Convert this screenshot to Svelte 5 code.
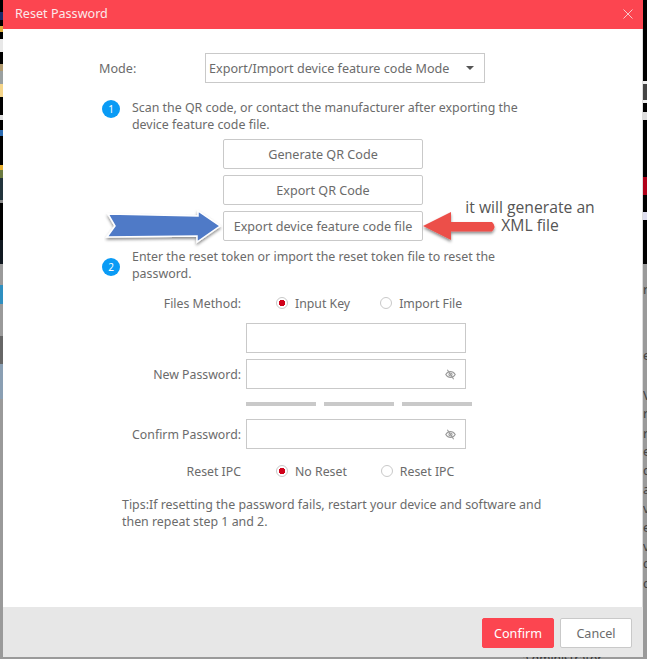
<script lang="ts">
  const stray = [
    { y: 281, t: "r" }, { y: 347, t: "e" }, { y: 387, t: "V" }, { y: 405, t: "r" },
    { y: 425, t: "r" }, { y: 443, t: "e" }, { y: 462, t: "c" }, { y: 481, t: "a" },
    { y: 500, t: "v" }, { y: 519, t: "e" }, { y: 538, t: "v" }, { y: 555, t: "c" },
    { y: 575, t: "c" }
  ];
</script>

{#snippet eye()}
  <svg class="eye" width="11" height="11" viewBox="0 0 14 14" aria-hidden="true">
    <path d="M1 7c1.600-2.600 3.600-3.900 6-3.900s4.400 1.300 6 3.900c-1.600 2.600-3.600 3.900-6 3.900S2.600 9.600 1 7z" fill="none" stroke="#999" stroke-width="1.400" />
    <circle cx="7" cy="7" r="2" fill="none" stroke="#999" stroke-width="1.400" />
    <path d="M3 1l8 12" stroke="#999" stroke-width="1.400" />
  </svg>
{/snippet}

<div class="screen">
  {#each stray as s}
    <span class="stray" style="top: {s.y}px">{s.t}</span>
  {/each}
  <span class="stray-bottom">a dministrator Recording</span>

  <div class="modal" role="dialog" aria-label="Reset Password">
    <div class="modal-head">
      <span class="title">Reset Password</span>
      <svg class="close" width="10" height="10" viewBox="0 0 10 10" aria-label="close">
        <path d="M.5.5l9 9M9.500.5l-9 9" stroke="#f6c9cc" stroke-width="1" />
      </svg>
    </div>

    <div class="body">
      <div class="mode-row">
        <span class="mode-label">Mode:</span>
        <div class="select">
          <span>Export/Import device feature code Mode</span>
          <i class="caret"></i>
        </div>
      </div>

      <div class="step first">
        <span class="num">1</span>
        <p>Scan the QR code, or contact the manufacturer after exporting the device feature code file.</p>
      </div>

      <div class="actions">
        <button>Generate QR Code</button>
        <button>Export QR Code</button>
        <button>Export device feature code file</button>
      </div>

      <div class="step second">
        <span class="num">2</span>
        <p>Enter the reset token or import the reset token file to reset the password.</p>
      </div>

      <div class="form">
        <div class="row radios">
          <label>Files Method:</label>
          <span class="radio on">Input Key</span>
          <span class="radio gap-files">Import File</span>
        </div>
        <div class="row token">
          <label></label>
          <div class="input"></div>
        </div>
        <div class="row">
          <label>New Password:</label>
          <div class="input">{@render eye()}</div>
        </div>
        <div class="strength">
          <i></i><i></i><i></i>
        </div>
        <div class="row">
          <label>Confirm Password:</label>
          <div class="input">{@render eye()}</div>
        </div>
        <div class="row radios ipc">
          <label>Reset IPC</label>
          <span class="radio on">No Reset</span>
          <span class="radio gap-ipc">Reset IPC</span>
        </div>
      </div>

      <p class="tips">Tips:If resetting the password fails, restart your device and software and then repeat step 1 and 2.</p>
    </div>

    <div class="modal-foot">
      <button class="confirm">Confirm</button>
      <button class="cancel">Cancel</button>
    </div>

    <!-- hand drawn annotations on top of the dialog -->
    <svg class="blue-arrow" width="130" height="48" viewBox="0 0 130 48" aria-hidden="true">
      <defs>
        <filter id="soft" x="-10%" y="-20%" width="125%" height="150%">
          <feDropShadow dx="0" dy="2" stdDeviation="1.800" flood-color="#000" flood-opacity="0.45" />
        </filter>
      </defs>
      <path d="M4 6 L94 8 L94 3 L116 18 L93 34 L93 28 L3 29 L11 18 Z" fill="#4f7ac7" stroke="#fff" stroke-width="1.500" filter="url(#soft)" />
    </svg>
    <svg class="red-arrow" width="80" height="34" viewBox="0 0 80 34" aria-hidden="true">
      <path d="M2 15 L30 1 L30 11 L71 11 Q76 15.500 71 20.500 L30 20.500 L30 29 Z" fill="#ec4f4a" filter="url(#soft)" />
    </svg>
    <div class="note">it will generate an<br />XML file</div>
  </div>
</div>

<style>
  :global(body) {
    margin: 0;
  }

  .screen {
    position: relative;
    width: 647px;
    height: 659px;
    box-sizing: border-box;
    padding: 0 4px 2px 3px;
    overflow: hidden;
    font-family: "Noto Sans", sans-serif;
    background:
      linear-gradient(to bottom,
        #000 0 12px, #1a2a6a 12px 20px, #000 20px 26px, #e0b040 26px 32px, #000 32px 39px,
        #e8e8e8 39px 52px, #000 52px 64px, #b09a70 64px 71px, #9aa0a0 71px 84px, #f5d58a 84px 97px,
        #000 97px 115px, #ddd 115px 120px, #000 120px 130px, #2a6ab0 130px 136px, #000 136px 165px,
        #e8b030 165px 170px, #6a7a40 170px 178px, #22343c 178px 200px, #8a8a8a 200px 203px,
        #000 203px 240px, #101820 240px 264px, #9a9a9a 264px 285px, #2f8fc0 285px 304px,
        #9a9a9a 304px 336px, #666 336px 364px, #8a9fb3 364px 399px, #9a9a9a 399px) left top / 3px 100% no-repeat,
      linear-gradient(to bottom,
        #000 0 81px, #eee 81px 84px, #444 84px 100px, #eee 100px 103px, #000 103px 112px,
        #ddd 112px 120px, #000 120px 177px, #b00018 177px 195px, #000 195px 212px,
        #dde 212px 220px, #000 220px 264px, #9a9a9a 264px) right top / 4px 100% no-repeat,
      #9a9a9a;
  }

  .stray {
    position: absolute;
    left: 643px;
    font-size: 13px;
    line-height: 16px;
    color: #444;
  }

  .stray-bottom {
    position: absolute;
    left: 522px;
    top: 652px;
    font-size: 12px;
    line-height: 14px;
    color: #333;
  }

  .modal {
    position: relative;
    display: flex;
    flex-direction: column;
    height: 657px;
    background: #fff;
    color: #6b6b6b;
    font-size: 12.6px;
  }

  .modal-head {
    display: flex;
    align-items: center;
    justify-content: space-between;
    flex: none;
    height: 29px;
    padding: 0 10px 2px 12px;
    box-sizing: border-box;
    background: #fc4550;
  }

  .title {
    color: #fbe9ea;
  }

  .body {
    flex: 1;
    padding: 24px 0 0 96px;
    border-right: 1px solid #ddd;
  }

  .mode-row {
    display: flex;
    align-items: center;
    height: 30px;
  }

  .mode-label {
    width: 106px;
  }

  .select {
    display: flex;
    align-items: center;
    justify-content: space-between;
    width: 280px;
    height: 30px;
    padding: 0 10px 0 3px;
    box-sizing: border-box;
    border: 1px solid #c9c9c9;
    white-space: nowrap;
  }

  .caret {
    width: 0;
    height: 0;
    border: 4px solid transparent;
    border-top-color: #555;
    border-bottom: 0;
  }

  .step {
    display: flex;
    width: 443px;
    padding-left: 3px;
    box-sizing: border-box;
    gap: 12px;
    font-size: 12.4px;
  }

  .step.first {
    margin-top: 16px;
  }

  .step.second {
    margin-top: 7px;
  }

  .step p {
    flex: 1;
    margin: 0;
    line-height: 17px;
  }

  .num {
    flex: none;
    width: 18px;
    height: 18px;
    margin-top: 1px;
    border-radius: 50%;
    background: #0a9bf5;
    color: #fff;
    font-size: 10px;
    line-height: 18px;
    text-align: center;
  }

  .step.second .num {
    margin-top: 10px;
  }

  .actions {
    display: flex;
    flex-direction: column;
    gap: 6px;
    width: 200px;
    margin: 6px 0 0 124px;
  }

  button {
    height: 30px;
    padding: 0;
    border: 1px solid #c9c9c9;
    border-radius: 2px;
    background: #fff;
    color: #6b6b6b;
    font: inherit;
  }

  .form {
    margin-top: 11px;
    display: flex;
    flex-direction: column;
    font-size: 12.3px;
  }

  .row {
    display: flex;
    align-items: center;
    gap: 5px;
    height: 30px;
    margin-bottom: 6px;
  }

  .row label {
    width: 142px;
    text-align: right;
    white-space: nowrap;
  }

  .radios {
    height: 20px;
    margin-bottom: 10px;
  }

  .radios label {
    margin-right: 30px;
  }

  .radio {
    display: flex;
    align-items: center;
    gap: 7px;
    white-space: nowrap;
  }

  .radio::before {
    content: "";
    width: 12px;
    height: 12px;
    box-sizing: border-box;
    border: 1px solid #c9c9c9;
    border-radius: 50%;
    background: #fff;
  }

  .radio.on::before {
    background: radial-gradient(circle, #d0021b 0 3px, #fff 3.500px);
  }

  .gap-files {
    margin-left: 25px;
  }

  .gap-ipc {
    margin-left: 29px;
  }

  .input {
    display: flex;
    align-items: center;
    justify-content: flex-end;
    width: 220px;
    height: 30px;
    padding-right: 9px;
    box-sizing: border-box;
    border: 1px solid #c9c9c9;
  }

  .strength {
    display: flex;
    gap: 8px;
    margin: 7px 0 13px 147px;
  }

  .strength i {
    width: 70px;
    height: 4px;
    background: #c9c9c9;
  }

  .ipc {
    margin-top: 6px;
  }

  .tips {
    width: 430px;
    margin: 5px 0 0 23px;
    font-size: 12.4px;
    line-height: 17px;
  }

  .modal-foot {
    display: flex;
    justify-content: flex-end;
    gap: 6px;
    flex: none;
    height: 50px;
    padding: 11px 11px 0 0;
    box-sizing: border-box;
    background: #e7e7e7;
  }

  .modal-foot button {
    width: 72px;
  }

  .confirm {
    border-color: #fc4550;
    background: #fc4550;
    color: #fff;
  }

  .blue-arrow {
    position: absolute;
    left: 101px;
    top: 208px;
  }

  .red-arrow {
    position: absolute;
    left: 418px;
    top: 211px;
  }

  .note {
    position: absolute;
    left: 447px;
    top: 198px;
    width: 160px;
    color: #555;
    font-family: "Open Sans", sans-serif;
    font-size: 15.7px;
    line-height: 18px;
    text-align: center;
  }
</style>
